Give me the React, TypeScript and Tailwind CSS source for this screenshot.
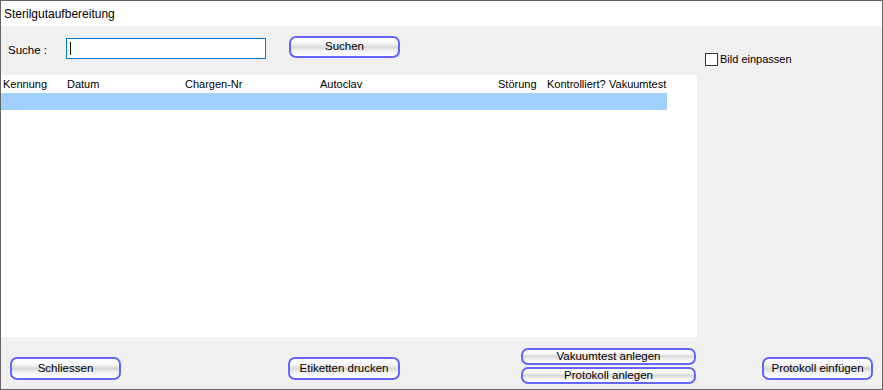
import React from "react";

type BtnProps = {
  label: string;
  className?: string;
};

function GlossButton({ label, className }: BtnProps) {
  return (
    <button
      className={
        "flex items-center justify-center border-2 border-[#6464ff] rounded-[7px] text-[11.5px] leading-none text-black bg-[linear-gradient(to_bottom,#ffffff_0%,#f6f6f6_30%,#d9d9d9_50%,#f2f2f2_72%,#ffffff_100%)] " +
        (className ?? "")
      }
    >
      {label}
    </button>
  );
}

const columns = [
  { name: "Kennung", w: "w-[64px]" },
  { name: "Datum", w: "w-[118px]" },
  { name: "Chargen-Nr", w: "w-[135px]" },
  { name: "Autoclav", w: "w-[178px]" },
  { name: "Störung", w: "w-[49px]" },
  { name: "Kontrolliert?", w: "w-[62px]" },
  { name: "Vakuumtest", w: "w-[60px]" },
];

export default function App() {
  return (
    <div className="w-[883px] h-[390px] border border-[#646464] flex flex-col bg-[#f0f0f0] font-['Liberation_Sans',Arial,sans-serif] text-[11.5px] text-black overflow-hidden">
      {/* title */}
      <div className="h-[25px] bg-white flex items-center pl-[3px] text-[12px]">
        Sterilgutaufbereitung
      </div>

      <div className="flex h-[311px]">
        {/* left column: search + table */}
        <div className="w-[696px] flex flex-col">
          <div className="h-[49px] flex items-start pl-[7px]">
            <span className="w-[58px] mt-[16px]">Suche :</span>
            <div className="mt-[12px] w-[200px] h-[21px] border border-[#0078d7] bg-white flex items-center pl-[3px]">
              <div className="w-px h-[13px] bg-black" />
            </div>
            <GlossButton label="Suchen" className="ml-[23px] mt-[10px] w-[111px] h-[22px]" />
          </div>

          <div className="flex-1 bg-white">
            <div className="h-[18px] flex items-center pl-[2px] text-[11px]">
              {columns.map((c) => (
                <span key={c.name} className={c.w + " shrink-0 whitespace-nowrap"}>
                  {c.name}
                </span>
              ))}
            </div>
            <div className="w-[666px] h-[17px] bg-[#9fd0ff]" />
          </div>
        </div>

        {/* right column */}
        <div className="flex-1 pl-[8px] pt-[25px]">
          <label className="flex items-center gap-[2px] text-[11px]">
            <span className="w-[13px] h-[13px] border border-[#333] bg-white" />
            <span>Bild einpassen</span>
          </label>
        </div>
      </div>

      {/* bottom bar */}
      <div className="flex-1 flex items-start">
        <GlossButton label="Schliessen" className="ml-[9px] mt-[20px] w-[111px] h-[23px]" />
        <GlossButton label="Etiketten drucken" className="ml-[167px] mt-[20px] w-[112px] h-[23px]" />
        <div className="ml-[121px] mt-[11px] flex flex-col gap-[2px]">
          <GlossButton label="Vakuumtest anlegen" className="w-[175px] h-[17px]" />
          <GlossButton label="Protokoll anlegen" className="w-[175px] h-[17px]" />
        </div>
        <GlossButton label="Protokoll einfügen" className="ml-[66px] mt-[20px] w-[111px] h-[23px]" />
      </div>
    </div>
  );
}
